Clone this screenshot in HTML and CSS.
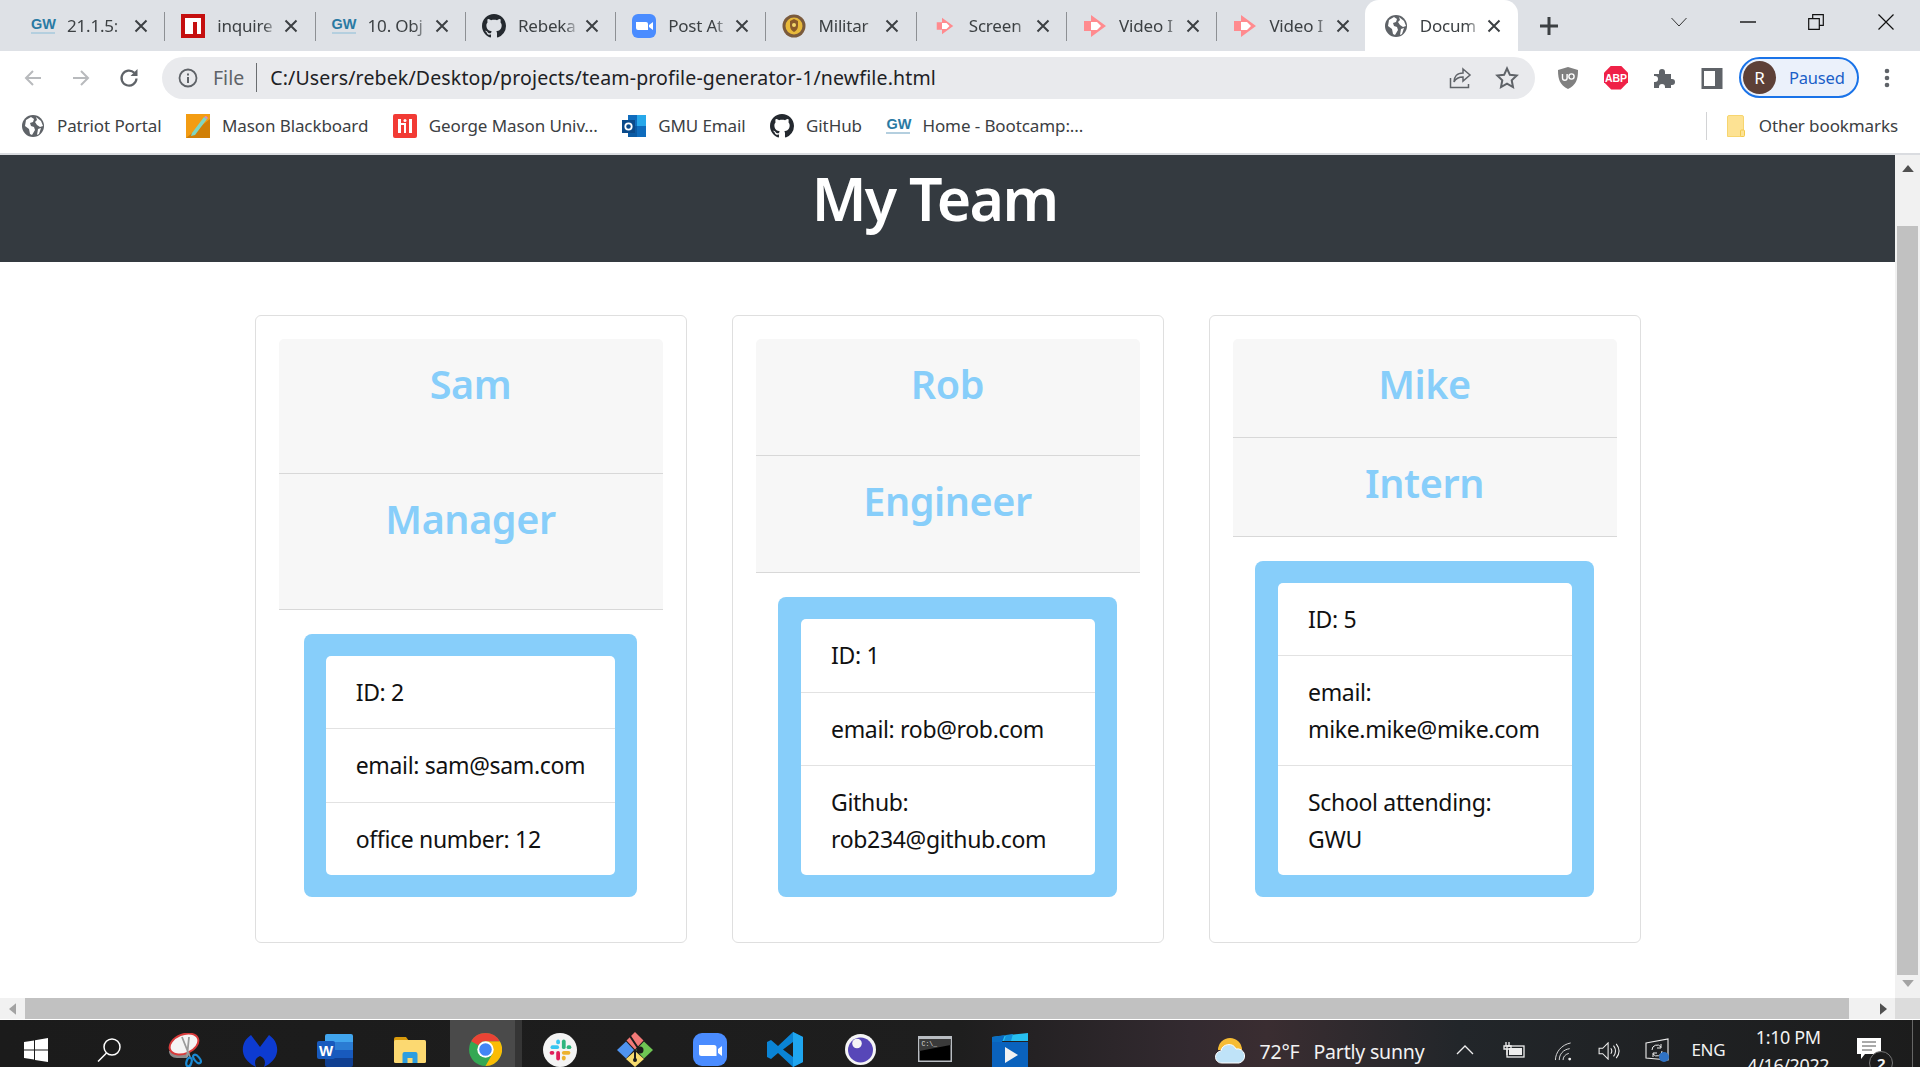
FILE: index.html
```html
<!DOCTYPE html>
<html lang="en">
<head>
<meta charset="utf-8">
<title>Document</title>
<link rel="stylesheet" href="styles.css">
</head>
<body>
<svg class="defs" width="0" height="0" aria-hidden="true">
  <symbol id="i-globe" viewBox="0 0 24 24"><circle cx="12" cy="12" r="11" fill="#5f6368"/><path d="M5 6l5-3 3 2-1 3-3 1 1 3 3 1 1 3-3 5-2-1-1-5-4-3zM15 3l5 4 2 5-3 1-3-2-2-3 2-2zM17 15l3-1-2 6-2 1z" fill="#fff"/></symbol>
  <symbol id="i-gh" viewBox="0 0 16 16"><path fill="#24292f" d="M8 0C3.58 0 0 3.58 0 8c0 3.54 2.29 6.53 5.47 7.59.4.07.55-.17.55-.38 0-.19-.01-.82-.01-1.49-2.01.37-2.53-.49-2.69-.94-.09-.23-.48-.94-.82-1.13-.28-.15-.68-.52-.01-.53.63-.01 1.08.58 1.23.82.72 1.21 1.87.87 2.33.66.07-.52.28-.87.51-1.07-1.78-.2-3.64-.89-3.64-3.95 0-.87.31-1.59.82-2.15-.08-.2-.36-1.02.08-2.12 0 0 .67-.21 2.2.82.64-.18 1.32-.27 2-.27.68 0 1.36.09 2 .27 1.53-1.04 2.2-.82 2.2-.82.44 1.1.16 1.92.08 2.12.51.56.82 1.27.82 2.15 0 3.07-1.87 3.75-3.65 3.95.29.25.54.73.54 1.48 0 1.07-.01 1.93-.01 2.2 0 .21.15.46.55.38A8.013 8.013 0 0016 8c0-4.420-3.58-8-8-8z"/></symbol>
  <symbol id="i-npm" viewBox="0 0 24 24"><rect width="24" height="24" fill="#c50f0f"/><path d="M4 4h16v16h-4V8h-4v12H4z" fill="#fff"/></symbol>
  <symbol id="i-zoom" viewBox="0 0 24 24"><rect width="24" height="24" rx="6" fill="#4a8cff"/><path d="M4 8h10a2 2 0 0 1 2 2v6H6a2 2 0 0 1-2-2zM17 11l4-3v8l-4-3z" fill="#fff"/></symbol>
  <symbol id="i-mil" viewBox="0 0 24 24"><circle cx="12" cy="12" r="11.500" fill="#7a5a3c"/><circle cx="12" cy="12" r="8.500" fill="#e8b93a"/><path d="M12 5l4 2v5c0 3-2 5-4 6-2-1-4-3-4-6V7z" fill="#8a5a2a"/><circle cx="12" cy="11" r="2" fill="#f3d76b"/></symbol>
  <symbol id="i-vid" viewBox="0 0 24 24"><path d="M8 1l15 11L8 23v-6H1V7h7z" fill="#ff8b8f"/><path d="M8 8h6l4 4-4 4H8z" fill="#fff"/></symbol>
  <symbol id="i-x" viewBox="0 0 14 14"><path d="M1.500 1.500l11 11M12.500 1.500l-11 11" stroke="#3c4043" stroke-width="2" fill="none"/></symbol>
</svg>

<div class="tabstrip">
  <div class="tab"><span class="gw">GW</span><span class="tab-label">21.1.5:</span><svg class="tab-x"><use href="#i-x"/></svg></div>
  <div class="tab"><svg class="fav"><use href="#i-npm"/></svg><span class="tab-label">inquire</span><svg class="tab-x"><use href="#i-x"/></svg></div>
  <div class="tab"><span class="gw">GW</span><span class="tab-label">10. Obj</span><svg class="tab-x"><use href="#i-x"/></svg></div>
  <div class="tab"><svg class="fav"><use href="#i-gh"/></svg><span class="tab-label">Rebeka</span><svg class="tab-x"><use href="#i-x"/></svg></div>
  <div class="tab"><svg class="fav"><use href="#i-zoom"/></svg><span class="tab-label">Post At</span><svg class="tab-x"><use href="#i-x"/></svg></div>
  <div class="tab"><svg class="fav"><use href="#i-mil"/></svg><span class="tab-label">Militar</span><svg class="tab-x"><use href="#i-x"/></svg></div>
  <div class="tab"><span class="fav-slot"><svg class="fav-sm"><use href="#i-vid"/></svg></span><span class="tab-label">Screen</span><svg class="tab-x"><use href="#i-x"/></svg></div>
  <div class="tab"><svg class="fav"><use href="#i-vid"/></svg><span class="tab-label">Video I</span><svg class="tab-x"><use href="#i-x"/></svg></div>
  <div class="tab tab-last"><svg class="fav"><use href="#i-vid"/></svg><span class="tab-label">Video I</span><svg class="tab-x"><use href="#i-x"/></svg></div>
  <div class="tab tab-active"><svg class="fav"><use href="#i-globe"/></svg><span class="tab-label">Docum</span><svg class="tab-x"><use href="#i-x"/></svg></div>
  <svg class="newtab" viewBox="0 0 18 18"><path d="M9 0v18M0 9h18" stroke="#3c4043" stroke-width="3"/></svg>
  <div class="winctl">
    <svg class="w-chev" viewBox="0 0 16 10"><path d="M.5 1L8 9l7.500-8" stroke="#333" fill="none"/></svg>
    <svg class="w-min" viewBox="0 0 16 2"><path d="M0 1h16" stroke="#111" stroke-width="1.400"/></svg>
    <svg class="w-max" viewBox="0 0 16 16"><path d="M.7 4.700h10.600v10.600H.7zM4.700 4.700V.7h10.600v10.600h-4" stroke="#111" fill="none" stroke-width="1.200"/></svg>
    <svg class="w-close" viewBox="0 0 16 16"><path d="M.5.500l15 15M15.500.500l-15 15" stroke="#111" stroke-width="1.200"/></svg>
  </div>
</div>

<div class="toolbar">
  <svg class="nav" viewBox="0 0 20 20"><path d="M18 10H3M10 3l-7 7 7 7" stroke="#b8babd" stroke-width="2" fill="none"/></svg>
  <svg class="nav" viewBox="0 0 20 20"><path d="M2 10h15M10 3l7 7-7 7" stroke="#b8babd" stroke-width="2" fill="none"/></svg>
  <svg class="nav" viewBox="0 0 20 20"><path d="M17.500 10.500a7.500 7.500 0 1 1-2.200-5.700" stroke="#5f6368" stroke-width="2.200" fill="none"/><path d="M18.500 1v7h-7z" fill="#5f6368"/></svg>
  <div class="omnibox">
    <svg class="info" viewBox="0 0 20 20"><circle cx="10" cy="10" r="8.500" stroke="#5f6368" stroke-width="1.800" fill="none"/><path d="M10 9v6M10 5.500v2" stroke="#5f6368" stroke-width="2"/></svg>
    <span class="file">File</span>
    <span class="url">C:/Users/rebek/Desktop/projects/team-profile-generator-1/newfile.html</span>
    <svg class="share" viewBox="0 0 24 24"><path d="M2.500 12v9.500h18V18" stroke="#5f6368" stroke-width="1.500" fill="none"/><path d="M15 3l7 6-7 6v-4c-4 0-7 1-9 5 0-5 3-9 9-9z" stroke="#5f6368" stroke-width="1.500" fill="none"/></svg>
    <svg class="star" viewBox="0 0 24 24"><path d="M12 2.500l2.900 6.300 6.800.8-5 4.700 1.300 6.800-6-3.400-6 3.400 1.300-6.800-5-4.700 6.800-.8z" stroke="#5f6368" stroke-width="2" fill="none"/></svg>
  </div>
  <svg class="ext ext-ub" viewBox="0 0 24 24"><path d="M12 1l10 3c0 10-2 15-10 19C4 19 2 14 2 4z" fill="#808080"/><path d="M6.500 8v4a2.300 2.300 0 0 0 4.600 0V8" stroke="#fff" stroke-width="1.400" fill="none"/><circle cx="15.500" cy="10.500" r="2.600" stroke="#fff" stroke-width="1.400" fill="none"/></svg>
  <div class="abp"><span>ABP</span></div>
  <svg class="ext" viewBox="0 0 24 24"><path d="M2 8h5V6a3 3 0 0 1 6 0v2h6v5h1a3 3 0 0 1 0 6h-1v3h-6v-1a3 3 0 0 0-6 0v1H2v-6h1a3 3 0 0 0 0-6H2z" fill="#5f6368"/></svg>
  <svg class="ext" viewBox="0 0 24 24"><rect x="1.500" y="2" width="21" height="21" fill="#5f6368"/><rect x="4" y="5" width="11" height="15" fill="#fff"/></svg>
  <div class="profile"><span class="avatar">R</span><span class="paused">Paused</span></div>
  <svg class="dots" viewBox="0 0 6 20"><circle cx="3" cy="3" r="2.300" fill="#5f6368"/><circle cx="3" cy="10" r="2.300" fill="#5f6368"/><circle cx="3" cy="17" r="2.300" fill="#5f6368"/></svg>
</div>

<div class="bookmarks">
  <div class="bm"><svg class="bm-ico"><use href="#i-globe"/></svg>Patriot Portal</div>
  <div class="bm"><svg class="bm-ico" viewBox="0 0 24 24"><rect width="24" height="24" fill="#f39c12"/><path d="M0 24h24V5z" fill="#d07f07"/><path d="M6 19L18 3l3 2L9 21l-4 1z" fill="#7fd6c2"/><path d="M18 3l2-1 2 2-1 1z" fill="#d58bd0"/></svg>Mason Blackboard</div>
  <div class="bm"><svg class="bm-ico" viewBox="0 0 24 24"><rect width="24" height="24" rx="2" fill="#f23b35"/><path d="M5 5h3v14H5zM16 5h3v14h-3zM11 10h2v9h-2zM8 9h5v2H8z" fill="#fff"/><circle cx="12" cy="6.500" r="1.500" fill="#fff"/></svg>George Mason Univ...</div>
  <div class="bm"><svg class="bm-ico" viewBox="0 0 24 24"><rect x="6" y="1" width="18" height="22" fill="#0f6cbd"/><rect x="15" y="1" width="9" height="11" fill="#28a8ea"/><rect x="6" y="12" width="9" height="11" fill="#0a5aa3"/><rect y="6" width="13" height="13" fill="#0a4a8a"/><circle cx="6.500" cy="12.500" r="3.200" stroke="#fff" stroke-width="1.800" fill="none"/></svg>GMU Email</div>
  <div class="bm"><svg class="bm-ico"><use href="#i-gh"/></svg>GitHub</div>
  <div class="bm"><span class="gw">GW</span>Home - Bootcamp:...</div>
  <div class="bm bm-other"><svg class="folder" viewBox="0 0 18 22"><path d="M.5 2a1.500 1.500 0 0 1 1.500-1.500h13a1.500 1.500 0 0 1 1.500 1.500v19.500H.5z" fill="#fde293" stroke="#f7d56f"/><rect x="13.500" y="15" width="4" height="6.500" rx="1" fill="#fde293" stroke="#f2c94c"/></svg>Other bookmarks</div>
</div>

<div class="viewport">
  <main class="page">
    <header class="hero"><h1 class="hero-title">My Team</h1></header>
    <section class="team">
      <article class="card">
        <div class="card-heads">
          <div class="card-head"><h2 class="head-text">Sam</h2></div>
          <div class="card-head"><h2 class="head-text">Manager</h2></div>
        </div>
        <div class="blue blue-fit">
          <ul class="facts">
            <li class="fact">ID: 2</li>
            <li class="fact">email: sam@sam.com</li>
            <li class="fact">office number: 12</li>
          </ul>
        </div>
      </article>
      <article class="card">
        <div class="card-heads">
          <div class="card-head"><h2 class="head-text">Rob</h2></div>
          <div class="card-head"><h2 class="head-text">Engineer</h2></div>
        </div>
        <div class="blue">
          <ul class="facts">
            <li class="fact">ID: 1</li>
            <li class="fact">email: rob@rob.com</li>
            <li class="fact">Github:<br>rob234@github.com</li>
          </ul>
        </div>
      </article>
      <article class="card">
        <div class="card-heads">
          <div class="card-head"><h2 class="head-text">Mike</h2></div>
          <div class="card-head"><h2 class="head-text">Intern</h2></div>
        </div>
        <div class="blue">
          <ul class="facts">
            <li class="fact">ID: 5</li>
            <li class="fact">email:<br>mike.mike@mike.com</li>
            <li class="fact">School attending:<br>GWU</li>
          </ul>
        </div>
      </article>
    </section>
  </main>
  <div class="vscroll">
    <svg class="arrow" viewBox="0 0 10 6"><path d="M5 0l5 6H0z" fill="#505050"/></svg>
    <div class="vthumb"></div>
    <svg class="arrow" viewBox="0 0 10 6"><path d="M5 6L0 0h10z" fill="#a3a3a3"/></svg>
  </div>
</div>

<div class="hscroll">
  <div class="harrow"><svg viewBox="0 0 6 10"><path d="M0 5l6-5v10z" fill="#a3a3a3"/></svg></div>
  <div class="hthumb"></div>
  <div class="harrow harrow-r"><svg viewBox="0 0 6 10"><path d="M6 5L0 0v10z" fill="#505050"/></svg></div>
  <div class="hcorner"></div>
</div>

<footer class="taskbar">
  <div class="apps">
    <div class="app app-first"><svg class="win" viewBox="0 0 24 24"><path d="M0 4l10-1.500V11.500H0zM11 2.300L24 0v11.500H11zM0 12.500h10v9L0 20zM11 12.500h13V24l-13-2z" fill="#fff"/></svg></div>
    <div class="app"><svg class="srch" viewBox="0 0 24 24"><circle cx="15" cy="9" r="8" stroke="#fff" stroke-width="1.500" fill="none"/><path d="M9.500 15L1 23.500" stroke="#fff" stroke-width="1.500"/></svg></div>
    <div class="app"><svg class="ic-snip" viewBox="0 0 34 34"><path d="M1 18c0 4 3 7 8 7h10l6-11z" fill="#8c8c8c"/><ellipse cx="16" cy="11" rx="15" ry="9.500" fill="#f4f4f4" stroke="#d83b3b" stroke-width="2" transform="rotate(-22 16 11)"/><path d="M14 4l8 20M21 4l-2 20" stroke="#9a9a9a" stroke-width="1.800"/><ellipse cx="21" cy="29" rx="2.500" ry="4.500" stroke="#1a8ad4" stroke-width="2.200" fill="none" transform="rotate(15 21 29)"/><ellipse cx="29" cy="26" rx="2.500" ry="5" stroke="#1a8ad4" stroke-width="2.200" fill="none" transform="rotate(-40 29 26)"/></svg></div>
    <div class="app"><svg class="ic-mb" viewBox="0 0 36 33"><path d="M9 1L18 13 27 1C33 5 36 11 35 18 34 25 28 30 22 33 24 28 23 24 18 22 13 24 12 28 14 33 8 30 2 25 1 18 0 11 3 5 9 1z" fill="#0d3bd1"/></svg></div>
    <div class="app"><svg class="ic-word" viewBox="0 0 36 33"><path d="M10 0h24a2 2 0 0 1 2 2v6H8V2a2 2 0 0 1 2-2z" fill="#41a5ee"/><rect x="8" y="8" width="28" height="8" fill="#2b7cd3"/><rect x="8" y="16" width="28" height="8" fill="#185abd"/><path d="M8 24h28v7a2 2 0 0 1-2 2H10a2 2 0 0 1-2-2z" fill="#103f91"/><rect y="7" width="18" height="18" rx="2" fill="#185abd"/><text class="word-w" x="9" y="21.500" text-anchor="middle">W</text></svg></div>
    <div class="app"><svg class="ic-folder" viewBox="0 0 32 26"><path d="M0 2a2 2 0 0 1 2-2h10l3 4v4H0z" fill="#d89a0c"/><rect y="3" width="32" height="23" rx="1.500" fill="#fcd971"/><path d="M11 26v-9a2 2 0 0 1 2-2h11a2 2 0 0 1 2 2v9h-5v-5h-5v5z" fill="#2c9ee0" transform="translate(-2.500 0)"/></svg></div>
    <div class="app app-on"><svg class="ic-chrome" viewBox="0 0 33 33"><circle cx="16.500" cy="16.500" r="16.500" fill="#34a853"/><path d="M16.500 8.250H30.800A16.500 16.500 0 0 1 16.500 33l7.150-12.400z" fill="#fbbc05"/><path d="M16.500 0a16.500 16.500 0 0 1 14.300 8.250H16.500a8.250 8.250 0 0 0-7.150 4.100L2.200 8.250A16.500 16.500 0 0 1 16.500 0z" fill="#ea4335"/><circle cx="16.500" cy="16.500" r="8.200" fill="#fff"/><circle cx="16.500" cy="16.500" r="6.300" fill="#4285f4"/></svg></div>
    <div class="app"><svg class="ic-slack" viewBox="0 0 36 36"><circle cx="18" cy="18" r="18" fill="#f4f4f4"/><rect x="8" y="13" width="9" height="4" rx="2" fill="#36c5f0"/><rect x="14" y="7" width="4" height="5" rx="2" fill="#36c5f0"/><rect x="20" y="7" width="4" height="10" rx="2" fill="#2eb67d"/><rect x="25" y="13" width="5" height="4" rx="2" fill="#2eb67d"/><rect x="20" y="19" width="9" height="4" rx="2" fill="#ecb22e"/><rect x="20" y="24" width="4" height="5" rx="2" fill="#ecb22e"/><rect x="14" y="19" width="4" height="10" rx="2" fill="#e01e5a"/><rect x="7" y="19" width="5" height="4" rx="2" fill="#e01e5a"/></svg></div>
    <div class="app"><svg class="ic-git" viewBox="0 0 36 35"><path d="M18 0l8.500 8.500-8.500 9-8.500-9z" fill="#f27a78"/><path d="M9 9.500l8 8.500-8 8.500L0 18z" fill="#4f94f0"/><path d="M27 9.500l9 8.500-9 8.500-8-8.500z" fill="#6fc653"/><path d="M18 19l9 8-9 8-9-8z" fill="#f7dc6f"/><path d="M13 4l6 9 2 3M18 19v8" stroke="#1c1c1c" stroke-width="2" fill="none"/><circle cx="23" cy="18" r="3.500" fill="#1c1c1c"/><circle cx="18" cy="28" r="2" fill="#1c1c1c"/></svg></div>
    <div class="app"><svg class="ic-zoom" viewBox="0 0 34 33"><rect width="34" height="33" rx="9" fill="#4a8cff"/><path d="M6 12h15a2.500 2.500 0 0 1 2.500 2.500V23H8.500A2.500 2.500 0 0 1 6 20.500zM25 16l4-3v10l-4-3z" fill="#fff"/></svg></div>
    <div class="app"><svg class="ic-vs" viewBox="0 0 36 35"><path fill-rule="evenodd" d="M26 0l10 5v25l-10 5-15-14-7 6-4-2V10l4-2 7 6zM26 10l-10 7.500L26 25z" fill="#0a84d6"/><path d="M26 0l10 5v25l-10 5z" fill="#1fa6f0"/></svg></div>
    <div class="app"><svg class="ic-ecl" viewBox="0 0 31 31"><circle cx="15.500" cy="15.500" r="15.500" fill="#f5f5f5"/><circle cx="15.500" cy="16" r="12.500" fill="#5747b8"/><circle cx="12" cy="9.500" r="4.800" fill="#f5f5f5"/></svg></div>
    <div class="app"><svg class="ic-cmd" viewBox="0 0 34 26"><rect width="34" height="26" fill="#b9bdc2"/><rect x="1.500" y="3" width="31" height="21.500" fill="#000"/><path d="M1.500 3h31v6L1.500 15z" fill="#3a3a3a"/><text class="cmd-t" x="3.500" y="10">C:\_</text></svg></div>
    <div class="app"><svg class="ic-vid" viewBox="0 0 36 34"><path d="M0 4L36 0v8H0z" fill="#27c0f0"/><path d="M0 4l13-2-3 7H0z" fill="#0a6dc4"/><path d="M14 2l7-1-2 7h-7z" fill="#1391dc"/><rect y="9" width="36" height="25" fill="#0a62bd"/><path d="M13 14l13 8-13 8z" fill="#f2f2f2"/></svg></div>
  </div>
  <div class="tray">
    <svg class="weather" viewBox="0 0 30 28"><path d="M3 14a12 12 0 0 1 24 0z" fill="#f6bc34"/><path d="M7 27a6 6 0 0 1-1-12 8 8 0 0 1 15-2 6.500 6.500 0 0 1 3 14z" fill="#bfe3f8" stroke="#fff"/></svg>
    <span class="wtext">72°F</span><span class="wtext wtext-2">Partly sunny</span>
    <svg class="t-caret" viewBox="0 0 18 10"><path d="M1 9l8-8 8 8" stroke="#eee" stroke-width="1.300" fill="none"/></svg>
    <svg class="t-batt" viewBox="0 0 24 16"><path d="M4 0v4M7 0v4M2 4h7v3H2z M5 7v6" stroke="#eee" stroke-width="1.300" fill="none"/><rect x="5" y="4" width="17" height="11" stroke="#eee" stroke-width="1.300" fill="none"/><rect x="7" y="6" width="13" height="7" fill="#eee"/></svg>
    <svg class="t-wifi" viewBox="0 0 20 20"><path d="M1 19C1 11 7 3 17 1M5 19c0-6 4-11 11-12M9 19c0-3 2-6 6-7" stroke="#ddd" fill="none"/><circle cx="16" cy="18" r="1.500" fill="#eee"/></svg>
    <svg class="t-vol" viewBox="0 0 24 20"><path d="M1 7h4l6-6v18l-6-6H1z" stroke="#eee" stroke-width="1.200" fill="none"/><path d="M14 7c1.500 2 1.500 4 0 6M17 4c3 4 3 8 0 12M20 2c4 5 4 11 0 16" stroke="#eee" stroke-width="1.200" fill="none"/></svg>
    <svg class="t-sync" viewBox="0 0 26 24"><path d="M1 5l22-4v21L1 20z" stroke="#eee" stroke-width="1.100" fill="none"/><path d="M7 12a5 5 0 0 1 9-3M16 6v4h-4M17 13a5 5 0 0 1-9 3M8 19v-4h4" stroke="#eee" fill="none"/><circle cx="19" cy="19" r="5" fill="#2f72c4"/></svg>
    <span class="eng">ENG</span>
    <div class="clock"><span>1:10 PM</span><span>4/16/2022</span></div>
    <div class="notif">
      <svg class="notif-ico" viewBox="0 0 24 22"><path d="M0 0h24v16H8l-4 5v-5H0z" fill="#fff"/><path d="M5 4h14M5 8h14M5 12h10" stroke="#555"/></svg>
      <span class="notif-badge">2</span>
    </div>
    <div class="desk-edge"></div>
  </div>
</footer>
</body>
</html>
```

FILE: styles.css
```css
* { box-sizing: border-box; }
html, body { margin: 0; height: 100%; }
body {
  height: 1067px;
  overflow: hidden;
  display: flex;
  flex-direction: column;
  font-family: "Noto Sans", "Open Sans", sans-serif;
  background: #fff;
}
.defs { position: absolute; }

/* tab strip */
.tabstrip {
  height: 51px;
  flex: none;
  background: #dee1e6;
  display: flex;
  padding-left: 15px;
}
.tab {
  position: relative;
  width: 150.3px;
  flex: none;
  padding-left: 16px;
  display: flex;
  align-items: center;
  font-size: 17px;
  color: #3c4043;
  letter-spacing: -.2px;
}
.tab::after {
  content: "";
  position: absolute;
  right: 0;
  top: 12px;
  height: 29px;
  width: 1px;
  background: #8d9094;
}
.tab-last::after, .tab-active::after { display: none; }
.tab-active { z-index: 0; }
.tab-active::before {
  content: "";
  position: absolute;
  left: -3px;
  right: 0;
  top: 0;
  bottom: 0;
  background: #fff;
  border-radius: 14px 14px 0 0;
  z-index: -1;
}
.fav { width: 24px; height: 24px; flex: none; }
.fav-slot { width: 24px; flex: none; display: flex; justify-content: center; }
.fav-sm { width: 20px; height: 18px; flex: none; }
.gw {
  width: 24px;
  flex: none;
  text-align: center;
  font: bold 14.500px/15px "Liberation Sans", sans-serif;
  letter-spacing: 0;
  color: #2a7aa3;
  border-bottom: 2px solid #b4cfdf;
}
.tab-label {
  width: 58px;
  margin-left: 12px;
  flex: none;
  white-space: nowrap;
  overflow: hidden;
  -webkit-mask-image: linear-gradient(90deg, #000 80%, rgba(0,0,0,.25) 100%);
  mask-image: linear-gradient(90deg, #000 80%, rgba(0,0,0,.25) 100%);
}
.tab-x { width: 14px; height: 14px; margin-left: 9px; flex: none; }
.newtab { width: 18px; height: 18px; align-self: center; margin-left: 22px; flex: none; }
.winctl { margin-left: auto; width: 272px; height: 51px; display: flex; align-items: flex-start; padding-left: 23px; }
.w-chev { width: 16px; height: 10px; margin-top: 17px; flex: none; }
.w-min { width: 16px; height: 2px; margin: 21px 0 0 53px; flex: none; }
.w-max { width: 16px; height: 16px; margin: 14px 0 0 52px; flex: none; }
.w-close { width: 16px; height: 16px; margin: 14px 0 0 54px; flex: none; }

/* toolbar */
.toolbar {
  height: 51px;
  flex: none;
  display: flex;
  align-items: center;
  padding: 2px 0 0 23px;
  background: #fff;
}
.nav { width: 20px; height: 20px; margin-right: 28px; flex: none; }
.omnibox {
  height: 42px;
  width: 1373px;
  margin-left: -5px;
  flex: none;
  border-radius: 21px;
  background: #e9eaed;
  display: flex;
  align-items: center;
  padding-left: 16px;
  font-size: 19.500px;
  color: #202124;
}
.info { width: 20px; height: 20px; flex: none; }
.file {
  color: #5f6368;
  margin-left: 15px;
  padding-right: 12px;
  line-height: 29px;
  border-right: 1px solid #6a6d70;
}
.url { margin-left: 13px; white-space: nowrap; letter-spacing: .15px; }
.share { width: 24px; height: 24px; margin-left: auto; flex: none; }
.star { width: 24px; height: 24px; margin: 0 16px 0 23px; flex: none; }
.ext { width: 24px; height: 24px; margin-left: 24px; flex: none; }
.ext-ub { margin-left: 21px; }
.abp {
  width: 24px;
  height: 24px;
  margin-left: 24px;
  flex: none;
  background: #ef2147;
  clip-path: polygon(30% 0, 70% 0, 100% 30%, 100% 70%, 70% 100%, 30% 100%, 0 70%, 0 30%);
  display: flex;
  align-items: center;
  justify-content: center;
}
.abp span { font: bold 10.500px "Liberation Sans", sans-serif; color: #fff; }
.profile {
  width: 120px;
  height: 41px;
  margin-left: 15px;
  flex: none;
  border: 2px solid #1a73e8;
  border-radius: 21px;
  background: #ebf1fb;
  display: flex;
  align-items: center;
  padding-left: 2px;
}
.avatar {
  width: 33px;
  height: 33px;
  border-radius: 50%;
  background: #5d4037;
  color: #fff;
  font-size: 17px;
  display: flex;
  align-items: center;
  justify-content: center;
  flex: none;
}
.paused { margin-left: 13px; color: #1a5fc8; font-size: 16.500px; letter-spacing: -.2px; }
.dots { width: 6px; height: 20px; margin-left: 25px; flex: none; }

/* bookmarks */
.bookmarks {
  height: 53px;
  flex: none;
  display: flex;
  align-items: center;
  padding: 0 0 4px 21px;
  border-bottom: 2px solid #dadce0;
  background: #fff;
  font-size: 17px;
  letter-spacing: -.1px;
  color: #3c4043;
}
.bm { display: flex; align-items: center; gap: 12px; margin-right: 24.500px; white-space: nowrap; flex: none; }
.bm-ico { width: 24px; height: 24px; flex: none; }
.folder { width: 18px; height: 22px; flex: none; margin-right: 2px; }
.bm-other {
  margin-left: auto;
  margin-right: 22px;
  padding-left: 20px;
  border-left: 1px solid #d2d3d5;
  height: 28px;
}

/* page */
.viewport { flex: 1; display: flex; min-height: 0; }
.page { flex: 1; min-width: 0; background: #fff; }
.hero {
  height: 107px;
  background: #343a40;
  color: #fff;
  text-align: center;
  padding-right: 26px;
}
.hero-title {
  margin: 0;
  font-size: 59px;
  line-height: 86px;
  font-weight: 600;
  letter-spacing: -1.700px;
}
.team {
  display: grid;
  grid-template-columns: repeat(3, 432px);
  column-gap: 45px;
  justify-content: center;
  margin-top: 53px;
}
.card {
  border: 1px solid #dfdfdf;
  border-radius: 6px;
  padding: 23px 23px 45px;
  display: flex;
  flex-direction: column;
  align-items: center;
}
.card-heads { align-self: stretch; flex: 1; display: flex; flex-direction: column; }
.card-head {
  flex: 1;
  background: #f7f7f7;
  border-bottom: 1px solid #d8d8d8;
  padding: 21px 10px 29px;
  text-align: center;
}
.card-head:first-child { border-radius: 5px 5px 0 0; }
.head-text {
  margin: 0;
  font-size: 39.500px;
  line-height: 48px;
  font-weight: 600;
  letter-spacing: -.4px;
  color: #87cefa;
}
.blue {
  margin-top: 24px;
  align-self: stretch;
  margin-left: 22.500px;
  margin-right: 22.500px;
  padding: 22px 22px 22px 23px;
  background: #87cefa;
  border-radius: 8px;
}
.blue-fit { align-self: center; margin-left: 0; margin-right: 0; width: fit-content; padding-left: 22px; }
.facts {
  list-style: none;
  margin: 0;
  padding: 0;
  background: #fff;
  border-radius: 5px;
}
.fact {
  padding: 18px 30px;
  font-size: 23px;
  line-height: 36.400px;
  letter-spacing: -.33px;
  color: #111;
  border-bottom: 1px solid #e2e2e2;
  white-space: nowrap;
}
.fact:last-child { border-bottom: 0; }

/* scrollbars */
.vscroll {
  width: 25px;
  flex: none;
  background: #f1f1f1;
  display: flex;
  flex-direction: column;
  align-items: center;
  padding-top: 10px;
}
.arrow { width: 12px; height: 7px; flex: none; }
.vthumb { width: 21px; height: 749px; margin: 54px 0 5px; background: #c1c1c1; flex: none; }
.hscroll {
  height: 22px;
  flex: none;
  background: #f1f1f1;
  display: flex;
  align-items: center;
  border-bottom: 1px solid #fff;
}
.harrow { width: 25px; flex: none; display: flex; align-items: center; justify-content: center; }
.harrow svg { width: 7px; height: 12px; }
.hthumb { width: 1824px; height: 21px; background: #c1c1c1; flex: none; }
.harrow-r { width: 46px; justify-content: flex-end; padding-right: 8px; }
.hcorner { width: 25px; height: 21px; background: #dcdcdc; flex: none; }

/* taskbar */
.taskbar {
  height: 47px;
  flex: none;
  overflow: hidden;
  display: flex;
  color: #fff;
  background: linear-gradient(90deg, #1b1b1b 0, #1e1e1e 50%, #332a30 62%, #3a2d31 66%, #22262a 76%, #1c1c1c 100%);
}
.apps { display: flex; flex: none; }
.app {
  width: 75px;
  height: 47px;
  flex: none;
  padding-top: 12px;
  display: flex;
  justify-content: center;
  align-items: flex-start;
}
.app-first { width: 72.500px; }
.app-on { background: linear-gradient(90deg, transparent 1.500px, #4a4a4a 1.500px, #4a4a4a 67.500px, #353535 67.500px, #353535 74.500px, transparent 74.500px); }
.win { width: 24px; height: 24px; margin-top: 6px; flex: none; }
.srch { width: 24px; height: 24px; margin: 6px 3px 0 0; flex: none; }
.ic-snip { width: 34px; height: 34px; margin-top: 1px; flex: none; }
.ic-mb { width: 36px; height: 33px; margin-top: 2px; flex: none; }
.ic-word { width: 36px; height: 33px; margin-top: 2px; flex: none; }
.ic-folder { width: 32px; height: 26px; margin-top: 5px; flex: none; }
.ic-chrome { width: 33px; height: 33px; margin-top: 1px; flex: none; }
.ic-slack { width: 34px; height: 34px; margin-top: 1px; flex: none; }
.ic-git { width: 36px; height: 35px; flex: none; }
.ic-zoom { width: 34px; height: 33px; margin-top: 1px; flex: none; }
.ic-vs { width: 36px; height: 35px; flex: none; }
.ic-ecl { width: 31px; height: 31px; margin-top: 2px; flex: none; }
.ic-cmd { width: 34px; height: 26px; margin-top: 4px; flex: none; }
.ic-vid { width: 36px; height: 34px; margin-top: 1px; flex: none; }
.word-w { font: bold 15px "Liberation Sans", sans-serif; fill: #fff; }
.cmd-t { font: 6.500px "Liberation Mono", monospace; fill: #ddd; }
.tray { flex: 1; display: flex; align-items: flex-start; position: relative; font-size: 19.500px; color: #f2f2f2; }
.weather { width: 30px; height: 28px; margin: 16px 0 0 167px; flex: none; }
.wtext { margin: 18px 0 0 15px; letter-spacing: -.2px; white-space: nowrap; }
.wtext-2 { margin-left: 14px; }
.t-caret { width: 18px; height: 10px; margin: 25px 0 0 32px; flex: none; }
.t-batt { width: 24px; height: 16px; margin: 22px 0 0 28px; flex: none; }
.t-wifi { width: 20px; height: 19px; margin: 22px 0 0 28px; flex: none; }
.t-vol { width: 24px; height: 18px; margin: 22px 0 0 23px; flex: none; }
.t-sync { width: 26px; height: 24px; margin: 18px 0 0 24px; flex: none; }
.eng { margin: 18px 0 0 20px; font-size: 17px; letter-spacing: -.3px; }
.clock {
  margin: 3px 0 0 3px;
  display: flex;
  flex-direction: column;
  align-items: center;
  font-size: 18px;
  line-height: 28px;
  letter-spacing: -.4px;
  white-space: nowrap;
  width: 120px;
}
.notif { position: relative; margin: 18px 0 0 9px; flex: none; }
.notif-ico { width: 24px; height: 22px; display: block; }
.notif-badge {
  position: absolute;
  left: 12px;
  top: 13px;
  width: 24px;
  height: 24px;
  border-radius: 50%;
  border: 1px solid #777;
  background: #1c1c1c;
  text-align: center;
  font-size: 15px;
  font-weight: 700;
  line-height: 22px;
}
.desk-edge { position: absolute; right: 7px; top: 0; bottom: 0; width: 1px; background: #666; }
```
